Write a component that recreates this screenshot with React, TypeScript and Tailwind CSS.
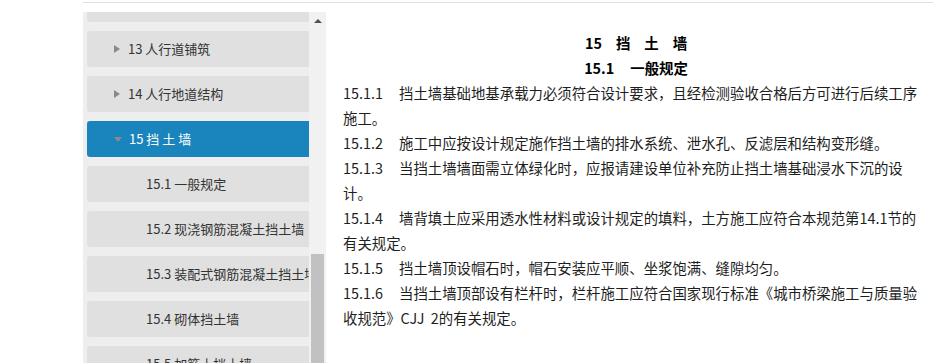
import React from "react";

const RightTri = () => (
  <span className="inline-block w-0 h-0 border-y-[4px] border-y-transparent border-l-[6px] border-l-[#8a8a8a] mr-[8px]" />
);
const DownTri = () => (
  <span className="inline-block w-0 h-0 border-x-[4px] border-x-transparent border-t-[5px] border-t-[#8a8a8a] mr-[7px]" />
);

type Item = { label: string; kind: "top" | "active" | "sub" };

const items: Item[] = [
  { label: "12 人行道", kind: "top" },
  { label: "13 人行道铺筑", kind: "top" },
  { label: "14 人行地道结构", kind: "top" },
  { label: "15 挡 土 墙", kind: "active" },
  { label: "15.1 一般规定", kind: "sub" },
  { label: "15.2 现浇钢筋混凝土挡土墙", kind: "sub" },
  { label: "15.3 装配式钢筋混凝土挡土墙", kind: "sub" },
  { label: "15.4 砌体挡土墙", kind: "sub" },
  { label: "15.5 加筋土挡土墙", kind: "sub" },
];

const paras: { n: string; l1: string; l2?: string }[] = [
  {
    n: "15.1.1",
    l1: "挡土墙基础地基承载力必须符合设计要求，且经检测验收合格后方可进行后续工序",
    l2: "施工。",
  },
  { n: "15.1.2", l1: "施工中应按设计规定施作挡土墙的排水系统、泄水孔、反滤层和结构变形缝。" },
  {
    n: "15.1.3",
    l1: "当挡土墙墙面需立体绿化时，应报请建设单位补充防止挡土墙基础浸水下沉的设",
    l2: "计。",
  },
  {
    n: "15.1.4",
    l1: "墙背填土应采用透水性材料或设计规定的填料，土方施工应符合本规范第14.1节的",
    l2: "有关规定。",
  },
  { n: "15.1.5", l1: "挡土墙顶设帽石时，帽石安装应平顺、坐浆饱满、缝隙均匀。" },
  {
    n: "15.1.6",
    l1: "当挡土墙顶部设有栏杆时，栏杆施工应符合国家现行标准《城市桥梁施工与质量验",
    l2: "收规范》CJJ\u00a0 2的有关规定。",
  },
];

export default function App() {
  return (
    <div className="w-[933px] h-[363px] bg-white overflow-hidden font-['Noto_Sans_CJK_SC',sans-serif]">
      <div className="ml-[83px] mt-[2px] h-px bg-[#e0e0e0]" />
      <div className="flex mt-[9px] h-[351px]">
        <div className="w-[83px] shrink-0" />
        {/* sidebar */}
        <div className="flex w-[243px] shrink-0 h-full">
          <div className="w-[226px] h-full overflow-hidden bg-[#eeeeee] pl-[4px]">
            <div className="mt-[-26px] w-[260px]">
              {items.map((it, i) => (
                <div
                  key={i}
                  className={
                    it.kind === "active"
                      ? "h-[36px] mb-[9px] rounded-[3px] bg-[#1a84bc] flex items-center pl-[27px] text-[13px] text-white whitespace-nowrap"
                      : it.kind === "top"
                      ? "h-[36px] mb-[9px] rounded-[3px] bg-[#e0e0e0] flex items-center pl-[27px] text-[13px] text-[#333] whitespace-nowrap"
                      : "h-[36px] mb-[9px] rounded-[3px] bg-[#e0e0e0] flex items-center pl-[59px] text-[13px] text-[#333] whitespace-nowrap"
                  }
                >
                  {it.kind === "top" && <RightTri />}
                  {it.kind === "active" && <DownTri />}
                  <span>{it.label}</span>
                </div>
              ))}
            </div>
          </div>
          <div className="w-[17px] h-full bg-[#f1f1f1] flex flex-col">
            <div className="h-[17px] flex items-center justify-center">
              <span className="inline-block w-0 h-0 border-x-[4px] border-x-transparent border-b-[4px] border-b-[#505050]" />
            </div>
            <div className="mt-[225px] mx-[2px] flex-1 bg-[#c1c1c1]" />
          </div>
        </div>
        {/* content */}
        <div className="flex-1 pl-[17px] pr-[4px] pt-[18px] text-[14.4px] leading-[25px] text-[#1e1e1e]">
          <div className="flex justify-center gap-[14px] font-bold text-black">
            <span>15</span>
            <span>挡</span>
            <span>土</span>
            <span>墙</span>
          </div>
          <div className="flex justify-center gap-[16px] font-bold text-black">
            <span>15.1</span>
            <span>一般规定</span>
          </div>
          {paras.map((p) => (
            <div key={p.n} className="whitespace-nowrap">
              <div>
                <span className="inline-block w-[56px]">{p.n}</span>
                <span>{p.l1}</span>
              </div>
              {p.l2 && <div>{p.l2}</div>}
            </div>
          ))}
        </div>
      </div>
    </div>
  );
}
